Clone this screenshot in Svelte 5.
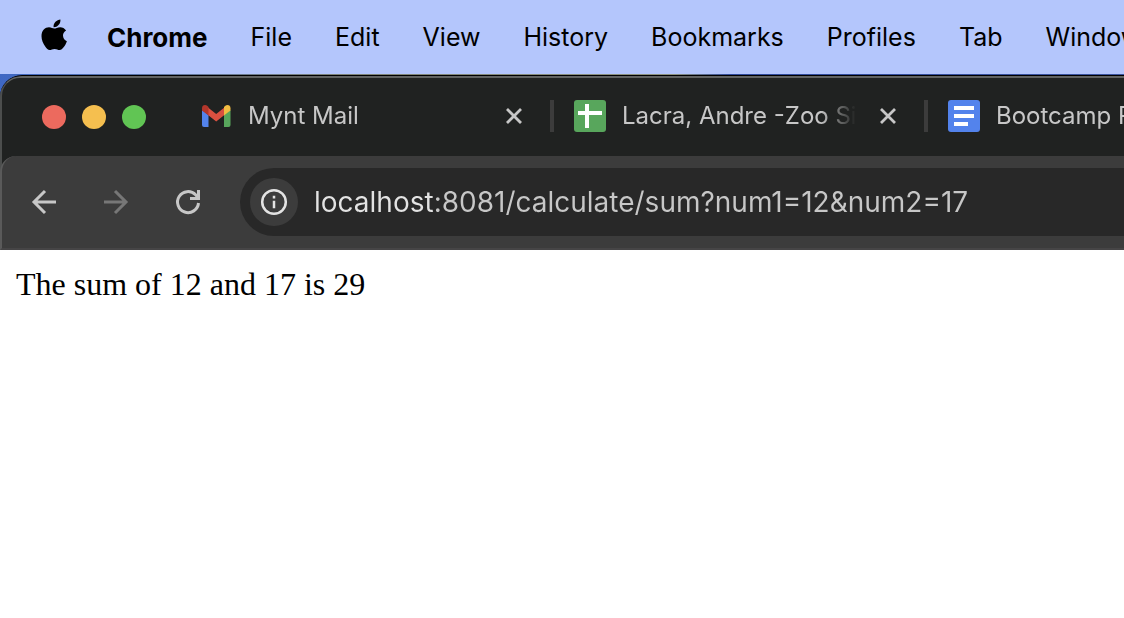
<script>
  const menus = ['File', 'Edit', 'View', 'History', 'Bookmarks', 'Profiles', 'Tab', 'Window'];
  const tabs = [
    { icon: 'mail', title: 'Mynt Mail' },
    { icon: 'sheet', title: 'Lacra, Andre -Zoo Si' },
    { icon: 'doc', title: 'Bootcamp P' }
  ];
  let address = $state('localhost:8081/calculate/sum?num1=12&num2=17');
</script>

<div class="screen">
  <nav class="menubar" aria-label="Menu bar">
    <button class="apple" aria-label="Apple menu">
      <svg width="28" height="32" viewBox="0 0 28 32" aria-hidden="true">
        <path d="M20.400.4c.3 2.200-.5 4.200-1.900 5.700-1.400 1.500-3.100 2.300-4.900 2.200-.3-2.100.5-4.100 1.900-5.500C16.800 1.400 18.700.5 20.400.4z" />
        <path d="M26.100 11.500c-2 1.300-3.100 3-3.100 5.100 0 2.500 1.500 4.700 3.900 5.600-.7 2.200-1.900 4.200-3.300 6.100-1.200 1.600-2.400 2.700-4 2.700-1.900 0-2.600-1.100-5-1.100s-3.200 1.100-5 1.100c-1.700 0-3-1.500-4.200-3.200C3.100 24.500 1.500 20.900 1.500 17.200c0-5.700 3.700-8.900 7.500-8.900 2.200 0 3.900 1.300 5.200 1.300 1.400 0 3.400-1.400 6-1.400 2.300 0 4.500 1.200 5.900 3.300z" />
      </svg>
    </button>
    <button class="app-name">Chrome</button>
    {#each menus as menu}
      <button>{menu}</button>
    {/each}
  </nav>

  <div class="desktop">
    <div class="window">
      <header class="tabstrip">
        <div class="lights">
          <button class="light close" aria-label="Close window"></button>
          <button class="light minimize" aria-label="Minimize window"></button>
          <button class="light zoom" aria-label="Zoom window"></button>
        </div>
        <ul class="tabs">
          {#each tabs as tab}
            <li>
              <button class="tab">
                <svg class="favicon" width="32" height="32" viewBox="0 0 32 32" aria-hidden="true">
                  {#if tab.icon === 'mail'}
                    <path fill="#5383ec" d="M2 10l6.500 5v12H4a2 2 0 0 1-2-2z" />
                    <path fill="#58a65c" d="M30.500 10L24 15v12h4.500a2 2 0 0 0 2-2z" />
                    <path fill="#d95040" d="M8 7.500l8.200 6.500 8.200-6.500V15l-8.200 6.500L8 15z" />
                    <path fill="#b3362b" d="M2 10.500V8.200c0-3 3-4 5.200-2.400L8.500 7v8.500z" />
                    <path fill="#f2bd42" d="M30.500 10.500V8.200c0-3-3-4-5.200-2.400L24 7v8.500z" />
                  {:else if tab.icon === 'sheet'}
                    <rect width="32" height="32" rx="3" fill="#58a65c" />
                    <path fill="#fff" d="M11 4h4v7h13v4H15v13h-4V15H4v-4h7z" />
                  {:else}
                    <rect width="32" height="32" rx="3" fill="#5383ec" />
                    <path fill="#fff" d="M6 6h20v4H6zM6 14h20v4H6zM6 22h14v4H6z" />
                  {/if}
                </svg>
                <span class="title">{tab.title}</span>
              </button>
              <button class="tab-close" aria-label="Close tab">
                <svg width="16" height="16" viewBox="0 0 16 16" aria-hidden="true">
                  <path d="M1 1l14 14M15 1L1 15" />
                </svg>
              </button>
            </li>
          {/each}
        </ul>
      </header>

      <div class="toolbar">
        <div class="nav">
          <button aria-label="Back">
            <svg width="28" height="28" viewBox="0 0 28 28" aria-hidden="true">
              <path d="M26 14H4M15 3L4 14l11 11" />
            </svg>
          </button>
          <button class="inactive" aria-label="Forward">
            <svg width="28" height="28" viewBox="0 0 28 28" aria-hidden="true">
              <path d="M2 14h22M13 3l11 11-11 11" />
            </svg>
          </button>
          <button aria-label="Reload">
            <svg width="28" height="28" viewBox="0 0 28 28" aria-hidden="true">
              <path d="M24.500 15A10.500 10.500 0 1 1 21.600 6.800L24 9.500M24.500 2v8.500H16" />
            </svg>
          </button>
        </div>
        <div class="omnibox">
          <button class="info" aria-label="View site information">
            <svg width="28" height="28" viewBox="0 0 28 28" aria-hidden="true">
              <circle cx="14" cy="14" r="11.800" />
              <path d="M14 12.800v7.400M14 7.800v2.600" />
            </svg>
          </button>
          <input aria-label="Address" type="text" spellcheck="false" bind:value={address} />
        </div>
      </div>

      <main>The sum of 12 and 17 is 29</main>
    </div>
  </div>
</div>

<style>
  :global(body) {
    margin: 0;
    background: #fff;
  }

  .screen {
    min-height: 100vh;
    display: flex;
    flex-direction: column;
    overflow: hidden;
    font-family: Inter, "Liberation Sans", sans-serif;
  }

  button {
    flex: none;
    border: 0;
    padding: 0;
    background: none;
    color: inherit;
    font: inherit;
    text-align: left;
    white-space: nowrap;
  }

  svg {
    display: block;
  }

  .menubar {
    display: flex;
    align-items: center;
    gap: 43px;
    height: 74px;
    padding-left: 40px;
    overflow: hidden;
    background: #b4c6fc;
    color: #000;
    font-size: 25px;
  }

  .apple {
    margin-right: -4px;
    padding-bottom: 4px;
  }

  .app-name {
    font-size: 26px;
    font-weight: 700;
  }

  .desktop {
    flex: 1;
    display: flex;
    padding-top: 1px;
    background: linear-gradient(90deg, #3f68c4, #7d8277 30%, #8d927f 60%, #2f4a9c 65%, #3c55a0) top / 100% 24px no-repeat;
  }

  .window {
    flex: 1;
    min-width: 0;
    display: flex;
    flex-direction: column;
    border-top: 1px solid #000;
    border-radius: 22px 0 0 0;
    overflow: hidden;
    background: linear-gradient(90deg, #4c4e4d 2px, #202221 2px);
  }

  .tabstrip {
    display: flex;
    align-items: center;
    height: 78px;
    border-top: 2px solid #616362;
    border-left: 2px solid #4c4e4d;
    border-radius: 20px 0 0 0;
    background: #202221;
  }

  .lights {
    flex: none;
    display: flex;
    gap: 16px;
    padding: 0 54px 0 40px;
  }

  .light {
    width: 24px;
    height: 24px;
    border-radius: 50%;
  }

  .close {
    background: #ec6a5e;
  }

  .minimize {
    background: #f5bf4f;
  }

  .zoom {
    background: #61c554;
  }

  .tabs {
    display: flex;
    gap: 20px;
    margin: 0 0 2px;
    padding: 0;
    list-style: none;
  }

  li {
    flex: none;
    display: flex;
    align-items: center;
    gap: 24px;
    width: 322px;
    padding-right: 28px;
    border-right: 4px solid #3c3c3c;
  }

  .tab {
    flex: 1;
    min-width: 0;
    display: flex;
    align-items: center;
    gap: 16px;
    height: 32px;
    color: #c7c7c7;
    font-size: 24px;
  }

  .favicon {
    flex: none;
  }

  .title {
    flex: 1;
    overflow: hidden;
    line-height: 32px;
    mask-image: linear-gradient(90deg, #000 calc(100% - 36px), transparent);
  }

  .tab-close svg {
    fill: none;
    stroke: #c7c7c7;
    stroke-width: 2.800;
  }

  .toolbar {
    display: flex;
    align-items: center;
    height: 92px;
    border-bottom: 2px solid #464546;
    border-left: 2px solid #5a5a5a;
    border-radius: 16px 0 0 0;
    background: #3c3c3c;
  }

  .nav {
    flex: none;
    display: flex;
    gap: 44px;
    padding: 0 38px 0 28px;
  }

  .nav svg {
    fill: none;
    stroke: #c7c7c7;
    stroke-width: 3;
  }

  .nav .inactive svg {
    stroke: #777;
  }

  .omnibox {
    flex: 1;
    display: flex;
    align-items: center;
    gap: 16px;
    height: 68px;
    padding-left: 10px;
    border-radius: 34px 0 0 34px;
    background: #282828;
  }

  .info {
    display: grid;
    place-items: center;
    width: 48px;
    height: 48px;
    border-radius: 50%;
    background: #3c3c3c;
  }

  .info svg {
    fill: none;
    stroke: #e3e3e3;
    stroke-width: 2.500;
  }

  input {
    flex: 1;
    min-width: 0;
    border: 0;
    padding: 0;
    outline: 0;
    background: linear-gradient(90deg, #e3e3e3 120px, #c7c7c7 120px);
    background-clip: text;
    color: transparent;
    font: 28px Inter, "Liberation Sans", sans-serif;
  }

  main {
    flex: 1;
    padding: 16px;
    background: #fff;
    color: #000;
    font: 32px/37px "Liberation Serif", "Times New Roman", serif;
  }
</style>
